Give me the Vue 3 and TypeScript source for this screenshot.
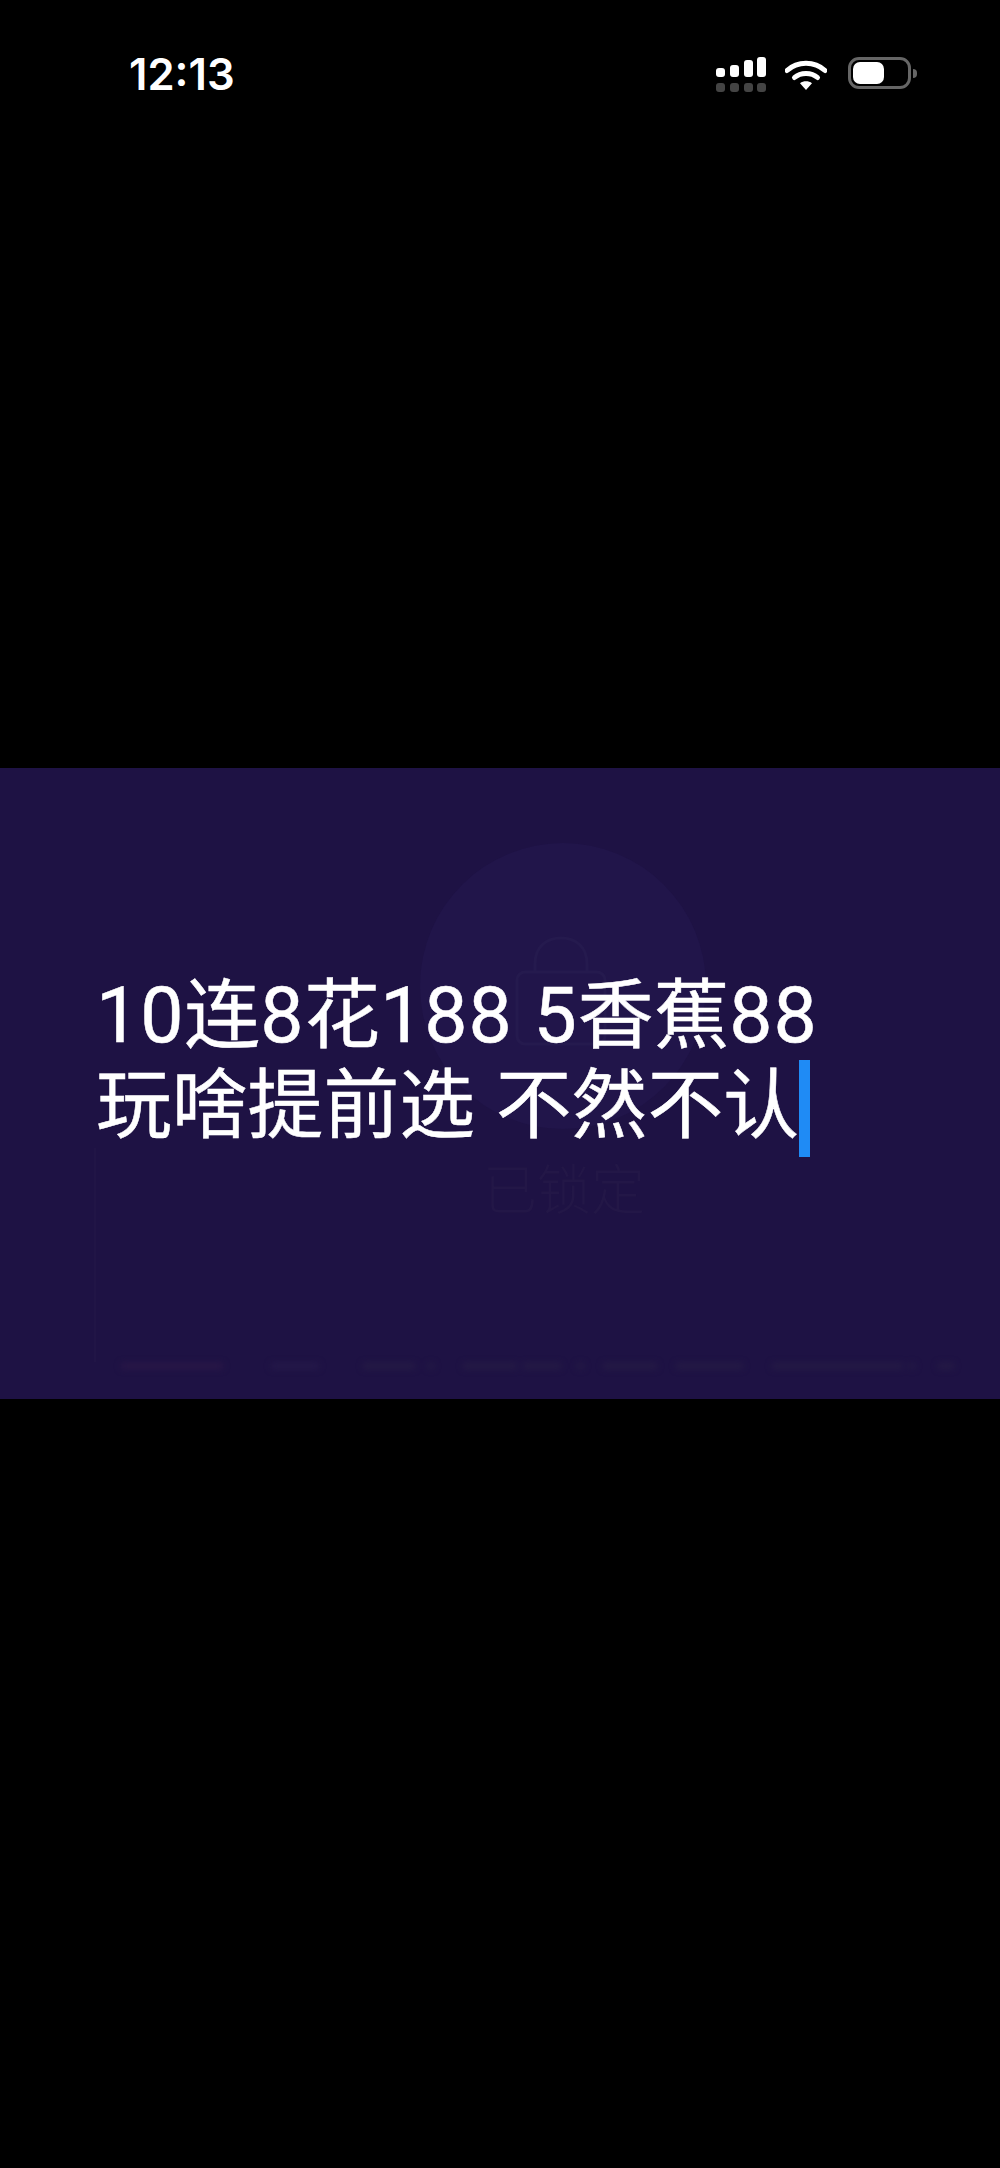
<script setup lang="ts">
interface Seg { t: string; num?: boolean }
const lines: Seg[][] = [
  [
    { t: '10', num: true }, { t: '连' }, { t: '8', num: true }, { t: '花' },
    { t: '188', num: true }, { t: ' ' }, { t: '5', num: true }, { t: '香蕉' }, { t: '88', num: true },
  ],
  [{ t: '玩啥提前选 不然不认' }],
]
const signal = [
  { x: 0, h: 9 },
  { x: 14, h: 12 },
  { x: 28, h: 17 },
  { x: 41, h: 20 },
]
const smudges = [
  { gap: 0, w: 102, c: '#2a1747' }, { gap: 48, w: 48, c: '#25194a' }, { gap: 44, w: 52, c: '#251b45' },
  { gap: 13, w: 6, c: '#251b45' }, { gap: 29, w: 54, c: '#251b45' }, { gap: 6, w: 38, c: '#251b45' },
  { gap: 16, w: 7, c: '#251b45' }, { gap: 19, w: 54, c: '#251b45' }, { gap: 19, w: 67, c: '#251b45' },
  { gap: 29, w: 131, c: '#251b45' }, { gap: 6, w: 6, c: '#251b45' }, { gap: 23, w: 16, c: '#251b45' },
]
</script>

<template>
  <main class="page">
    <section class="top">
      <header class="status">
        <span class="time">12:13</span>
        <div class="icons">
          <svg class="signal" width="52" height="35" viewBox="0 0 52 35">
            <rect v-for="s in signal" :key="s.x" :x="s.x" :y="20 - s.h" width="9" :height="s.h" rx="3" fill="#fff" />
            <rect v-for="s in signal" :key="'g' + s.x" :x="s.x" y="26" width="9" height="9" rx="3" fill="#444" />
          </svg>
          <svg class="wifi" width="42" height="32" viewBox="0 0 42 32">
            <path d="M2 12.5C12.5 2.8 29.5 2.8 40 12.5" fill="none" stroke="#fff" stroke-width="5" stroke-linecap="round" />
            <path d="M9.5 19.5C15.5 14 26.5 14 32.5 19.5" fill="none" stroke="#fff" stroke-width="5" stroke-linecap="round" />
            <path d="M15 25.2C18.5 22.6 23.5 22.6 27 25.2L21 32Z" fill="#fff" />
          </svg>
          <div class="battery"><div class="level"></div></div>
          <div class="nub"></div>
        </div>
      </header>
    </section>

    <section class="video">
      <div class="frame"></div>
      <div class="ghost">
        <div class="disc">
          <svg width="100" height="110" viewBox="0 0 100 110" class="lock">
            <path d="M22 36V28C22 10 34 2 48 2S74 10 74 28V36" fill="none" stroke="#251a4e" stroke-width="3" />
            <rect x="4" y="36" width="88" height="72" rx="8" fill="none" stroke="#251a4e" stroke-width="3" />
          </svg>
        </div>
        <div class="locked">已锁定</div>
        <div class="smudges">
          <i v-for="(s, i) in smudges" :key="i" :style="{ width: s.w + 'px', marginLeft: s.gap + 'px', background: s.c }"></i>
        </div>
      </div>
      <div class="caption">
        <p v-for="(line, i) in lines" :key="i"><span v-for="(seg, j) in line" :key="j" :class="{ num: seg.num }">{{ seg.t }}</span><span v-if="i === lines.length - 1" class="caret"></span></p>
      </div>
    </section>

    <section class="bottom"></section>
  </main>
</template>

<style>
html, body { margin: 0; background: #000; }
</style>

<style scoped>
.page {
  width: 1000px;
  height: 2168px;
  background: #000;
  display: flex;
  flex-direction: column;
  overflow: hidden;
  font-family: "Noto Sans CJK SC", "Noto Sans", sans-serif;
}
.top { height: 768px; }
.status {
  display: flex;
  justify-content: space-between;
  align-items: flex-start;
  padding: 50px 83px 0 129px;
}
.time {
  font-family: Inter, "Liberation Sans", sans-serif;
  font-weight: 600;
  font-size: 43.6px;
  line-height: 50px;
  color: #fff;
}
.icons {
  display: flex;
  align-items: flex-start;
  margin-top: 7px;
}
.signal { margin-right: 17px; display: block; }
.wifi { margin-top: 1px; margin-right: 21px; display: block; }
.battery {
  width: 63px;
  height: 32px;
  box-sizing: border-box;
  border: 3px solid #666;
  border-radius: 11px;
  padding: 2px;
}
.level { width: 31px; height: 100%; background: #fff; border-radius: 7px; }
.nub {
  width: 4px;
  height: 9px;
  margin: 12px 0 0 2px;
  background: #666;
  border-radius: 0 4px 4px 0;
}
.video {
  height: 631px;
  background: #1e1244;
  display: grid;
  overflow: hidden;
}
.frame, .ghost, .caption { grid-area: 1 / 1; min-width: 0; }
.frame {
  width: 820px;
  height: 214px;
  margin: 380px 0 0 94px;
  border-left: 2px solid #211546;
  box-sizing: border-box;
}
.ghost {
  display: flex;
  flex-direction: column;
  align-items: center;
}
.disc {
  width: 286px;
  height: 286px;
  margin: 75px 0 0 126px;
  border-radius: 50%;
  background: #21154a;
  display: flex;
  justify-content: center;
  flex-shrink: 0;
}
.lock { margin-top: 93px; }
.locked {
  margin: 28px 0 0 128px;
  font-size: 54px;
  line-height: 60px;
  color: #231747;
  font-weight: 300;
}
.smudges {
  display: flex;
  width: 820px;
  margin: 146px 0 0 62px;
  filter: blur(3px);
  flex-shrink: 0;
}
.smudges i { display: block; height: 6px; flex-shrink: 0; }
.caption {
  padding: 203px 0 0 96px;
}
.caption p {
  margin: 0;
  font-family: Roboto, "Noto Sans CJK SC", sans-serif;
  font-size: 75.8px;
  line-height: 90px;
  color: #fff;
  white-space: nowrap;
  word-spacing: 2px;
  -webkit-text-stroke: 0.5px #fff;
}
.num {
  font-size: 77px;
  letter-spacing: 0.9px;
}
.caret {
  display: inline-block;
  width: 11px;
  height: 97px;
  margin: -11px 0 -5px 0;
  background: #1f8bf5;
  vertical-align: middle;
}
.bottom { flex: 1; }
</style>
